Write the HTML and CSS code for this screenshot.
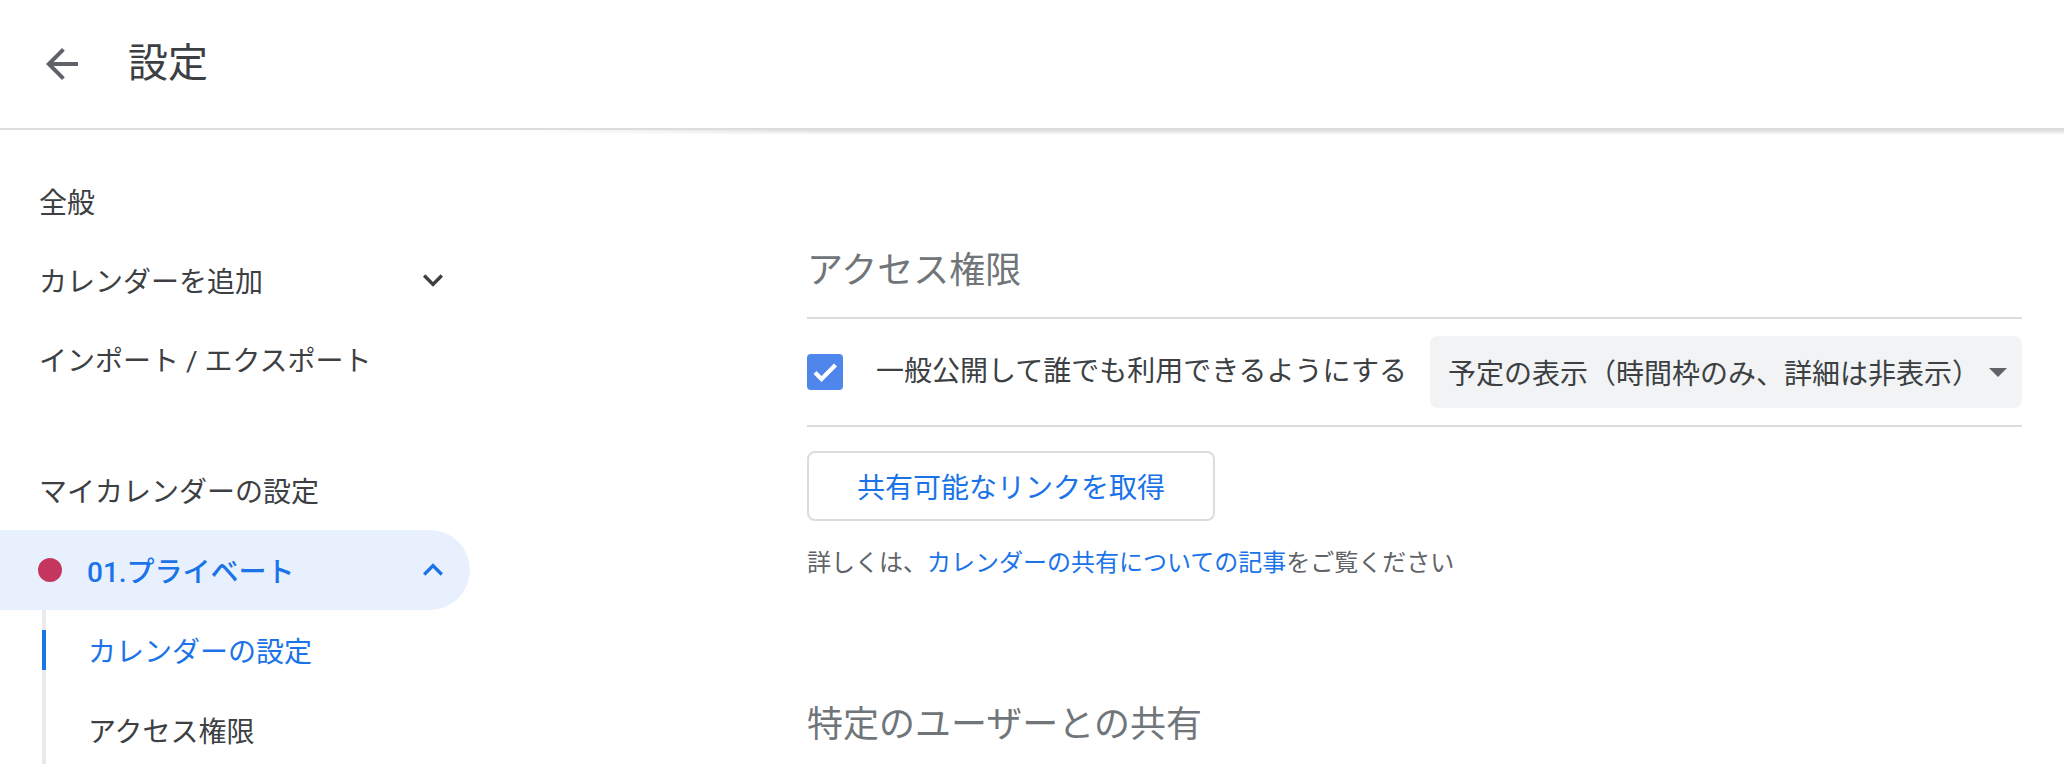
FILE: index.html
```html
<!DOCTYPE html>
<html lang="ja">
<head>
    <meta charset="UTF-8">
    <meta name="viewport" content="width=device-width, initial-scale=1.0">
    <title>設定</title>
    <link rel="stylesheet" href="styles.css">
</head>
<body>
<header class="topbar">
    <button class="back-btn" aria-label="戻る">
        <svg viewBox="0 0 24 24" width="48" height="48"><path d="M20 11H7.83l5.59-5.59L12 4l-8 8 8 8 1.41-1.41L7.83 13H20v-2z"/></svg>
    </button>
    <h1>設定</h1>
</header>

<div class="layout">
    <nav class="sidebar">
        <a class="nav-item">全般</a>
        <a class="nav-item">カレンダーを追加
            <svg viewBox="0 0 24 24"><path d="M16.59 8.59L12 13.17 7.41 8.59 6 10l6 6 6-6z"/></svg>
        </a>
        <a class="nav-item">インポート / エクスポート</a>

        <div class="nav-heading">マイカレンダーの設定</div>
        <a class="nav-item calendar">
            <span class="dot"></span>01.プライベート
            <svg viewBox="0 0 24 24"><path d="M12 8l-6 6 1.41 1.41L12 10.83l4.59 4.58L18 14z"/></svg>
        </a>
        <div class="sub-list">
            <a class="sub-item active"><span class="sub-mark"></span>カレンダーの設定</a>
            <a class="sub-item"><span class="sub-mark"></span>アクセス権限</a>
        </div>
    </nav>

    <main class="content">
        <div class="top-shadow"></div>

        <section>
            <h2>アクセス権限</h2>
            <div class="option-row">
                <span class="checkbox">
                    <svg viewBox="0 0 36 36" width="36" height="36"><path d="M8 18.5l6.5 6.5L28.5 11" fill="none" stroke="#fff" stroke-width="4.2"/></svg>
                </span>
                <span class="option-label">一般公開して誰でも利用できるようにする</span>
                <div class="select">
                    予定の表示（時間枠のみ、詳細は非表示）
                    <svg viewBox="0 0 20 10"><path d="M0 0h20L10 10z"/></svg>
                </div>
            </div>
            <button class="outline-btn">共有可能なリンクを取得</button>
            <p class="help">詳しくは、<a href="#">カレンダーの共有についての記事</a>をご覧ください</p>
        </section>

        <section>
            <h2 class="next-title">特定のユーザーとの共有</h2>
        </section>
    </main>
</div>
</body>
</html>
```

FILE: styles.css
```css
body {
    margin: 0;
    font-family: Roboto, "Noto Sans CJK JP", sans-serif;
    color: #3c4043;
    background: #fff;
    overflow: hidden;
}
a {
    text-decoration: none;
}

/* header */
.topbar {
    height: 128px;
    border-bottom: 2px solid #dadce0;
    display: flex;
    align-items: center;
    padding-left: 38px;
}
.back-btn {
    display: flex;
    width: 48px;
    height: 48px;
    padding: 0;
    border: none;
    background: none;
    fill: #5f6368;
    margin-right: 42px;
}
h1 {
    margin: 0;
    font-size: 40px;
    line-height: 48px;
    font-weight: 400;
    color: #3c4043;
}

.layout {
    display: flex;
}

/* sidebar */
.sidebar {
    width: 502px;
    flex-shrink: 0;
    padding-top: 31px;
}
.nav-item {
    display: flex;
    align-items: center;
    box-sizing: border-box;
    width: 470px;
    height: 79px;
    padding: 0 17px 0 39px;
    font-size: 28px;
    color: #3c4043;
    white-space: nowrap;
}
.nav-item svg {
    margin-left: auto;
    width: 40px;
    height: 40px;
    fill: #3c4043;
}
.nav-heading {
    display: flex;
    align-items: center;
    height: 80px;
    margin-top: 52px;
    padding-left: 39px;
    font-size: 28px;
}
.calendar {
    height: 80px;
    padding-left: 38px;
    background: #e8f0fe;
    border-radius: 0 40px 40px 0;
    color: #1a73e8;
    font-weight: 500;
}
.calendar svg {
    fill: #1a73e8;
}
.dot {
    width: 24px;
    height: 24px;
    border-radius: 50%;
    background: #c5365f;
    margin-right: 25px;
}
.sub-list {
    margin-left: 42px;
}
.sub-item {
    display: flex;
    align-items: center;
    height: 80px;
    font-size: 28px;
    color: #3c4043;
}
.sub-mark {
    align-self: stretch;
    display: flex;
    align-items: center;
    width: 4px;
    background: #e8eaed;
    margin-right: 42px;
}
.sub-item.active {
    color: #1a73e8;
}
.sub-item.active .sub-mark::after {
    content: "";
    width: 4px;
    height: 40px;
    background: #1a73e8;
}

/* main */
.content {
    flex: 1;
    padding: 0 42px 0 305px;
}
.top-shadow {
    height: 5px;
    margin: 0 -42px 0 -305px;
    background: linear-gradient(rgba(60, 64, 67, .18), rgba(60, 64, 67, 0));
    -webkit-mask-image: linear-gradient(to right, transparent, #000 320px);
    mask-image: linear-gradient(to right, transparent, #000 320px);
}
h2 {
    margin: 112px 0 22px;
    font-size: 36px;
    line-height: 48px;
    font-weight: 400;
    color: #70757a;
}
.next-title {
    margin-top: 120px;
}
.option-row {
    display: flex;
    align-items: center;
    padding: 17px 0;
    border-top: 2px solid #dadce0;
    border-bottom: 2px solid #dadce0;
}
.checkbox {
    display: flex;
    flex-shrink: 0;
    width: 36px;
    height: 36px;
    border-radius: 4px;
    background: #4f86ec;
    margin-right: 33px;
}
.option-label {
    font-size: 28px;
    line-height: 40px;
    white-space: nowrap;
}
.select {
    flex: 1;
    min-width: 0;
    display: flex;
    align-items: center;
    height: 72px;
    margin-left: 23px;
    padding: 0 15px 0 18px;
    background: #f1f3f4;
    border-radius: 8px;
    font-size: 28px;
    white-space: nowrap;
    color: #3c4043;
}
.select svg {
    margin-left: auto;
    width: 18px;
    height: 9px;
    fill: #5f6368;
}
.outline-btn {
    display: block;
    width: 408px;
    height: 70px;
    margin-top: 24px;
    border: 2px solid #dadce0;
    border-radius: 8px;
    background: #fff;
    color: #1a73e8;
    font-family: inherit;
    font-size: 28px;
}
.help {
    margin: 24px 0 0;
    font-size: 24px;
    line-height: 36px;
    color: #5f6368;
}
.help a {
    color: #1a73e8;
}
```
